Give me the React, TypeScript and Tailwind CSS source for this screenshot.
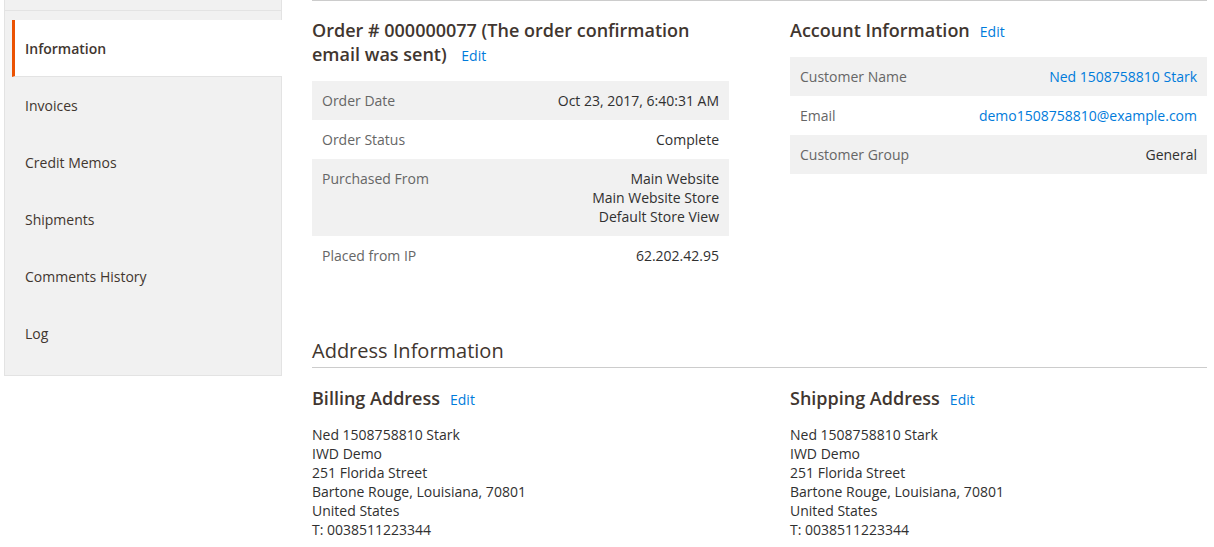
const navItems = [
  { label: "Information", active: true },
  { label: "Invoices" },
  { label: "Credit Memos" },
  { label: "Shipments" },
  { label: "Comments History" },
  { label: "Log" }
];

const orderRows = [
  { label: "Order Date", value: ["Oct 23, 2017, 6:40:31 AM"] },
  { label: "Order Status", value: ["Complete"] },
  {
    label: "Purchased From",
    value: ["Main Website", "Main Website Store", "Default Store View"]
  },
  { label: "Placed from IP", value: ["62.202.42.95"] }
];

const accountRows = [
  { label: "Customer Name", value: "Ned 1508758810 Stark", link: true },
  { label: "Email", value: "demo1508758810@example.com", link: true },
  { label: "Customer Group", value: "General" }
];

const addressLines = [
  "Ned 1508758810 Stark",
  "IWD Demo",
  "251 Florida Street",
  "Bartone Rouge, Louisiana, 70801",
  "United States",
  "T: 0038511223344"
];

function EditLink() {
  return (
    <a href="#" className="ml-[10px] text-[14px] font-normal text-[#007bdb]">
      Edit
    </a>
  );
}

function Sidebar() {
  return (
    <nav className="ml-[4px] w-[278px] self-start border border-t-0 border-[#e3e3e3] bg-[#f1f1f1] pb-[13px]">
      <div className="h-[11px] border-b border-[#e3e3e3]" />
      <ul className="mt-[9px] ml-[7px]">
        {navItems.map((item) =>
          item.active ? (
            <li
              key={item.label}
              className="mr-[-1px] border-b border-l-[3px] border-b-[#e3e3e3] border-l-[#eb5202] bg-white pt-[19px] pb-[18px] pl-[10px] text-[14px] leading-[19px] font-semibold text-[#41362f]"
            >
              {item.label}
            </li>
          ) : (
            <li
              key={item.label}
              className="border-l-[3px] border-transparent py-[19px] pl-[10px] text-[14px] leading-[19px] text-[#41362f]"
            >
              {item.label}
            </li>
          )
        )}
      </ul>
    </nav>
  );
}

function InfoTable({
  rows
}: {
  rows: { label: string; value: React.ReactNode }[];
}) {
  return (
    <table className="w-full border-collapse text-[14px] leading-[19px]">
      <tbody>
        {rows.map((row, i) => (
          <tr key={row.label} className={i % 2 === 0 ? "bg-[#f1f1f1]" : ""}>
            <th className="px-[10px] py-[10px] text-left align-top font-normal text-[#666]">
              {row.label}
            </th>
            <td className="px-[10px] py-[10px] text-right align-top text-[#303030]">
              {row.value}
            </td>
          </tr>
        ))}
      </tbody>
    </table>
  );
}

function Address({ title }: { title: string }) {
  return (
    <div>
      <h3 className="text-[18px] leading-[24px] font-semibold text-[#41362f]">
        {title}
        <EditLink />
      </h3>
      <address className="mt-[13px] text-[14px] leading-[19px] not-italic text-[#303030]">
        {addressLines.map((line) => (
          <div key={line}>{line}</div>
        ))}
      </address>
    </div>
  );
}

export default function App() {
  return (
    <div
      className="flex h-[547px] w-full overflow-hidden bg-white"
      style={{ fontFamily: '"Open Sans", "Noto Sans", sans-serif' }}
    >
      <Sidebar />

      <main className="ml-[30px] w-[895px]">
        <div className="grid grid-cols-[417px_417px] gap-x-[61px] border-t border-[#cccccc] pt-[17px]">
          <section>
            <h2 className="text-[18px] leading-[24px] font-semibold text-[#41362f]">
              Order # 000000077 (The order confirmation email was sent){" "}
              <EditLink />
            </h2>
            <div className="mt-[13px]">
              <InfoTable
                rows={orderRows.map((row) => ({
                  label: row.label,
                  value: row.value.map((line) => <div key={line}>{line}</div>)
                }))}
              />
            </div>
          </section>

          <section>
            <h2 className="text-[18px] leading-[24px] font-semibold text-[#41362f]">
              Account Information
              <EditLink />
            </h2>
            <div className="mt-[13px]">
              <InfoTable
                rows={accountRows.map((row) => ({
                  label: row.label,
                  value: row.link ? (
                    <a href="#" className="text-[#007bdb]">
                      {row.value}
                    </a>
                  ) : (
                    row.value
                  )
                }))}
              />
            </div>
          </section>
        </div>

        <h2 className="mt-[64px] border-b border-[#cccccc] pb-[4px] text-[20px] leading-[24px] text-[#41362f]">
          Address Information
        </h2>

        <div className="mt-[18px] grid grid-cols-[417px_417px] gap-x-[61px]">
          <Address title="Billing Address" />
          <Address title="Shipping Address" />
        </div>
      </main>
    </div>
  );
}
